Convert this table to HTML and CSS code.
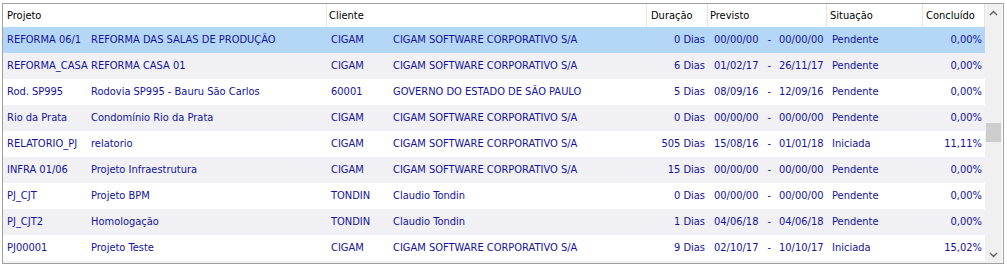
FILE: index.html
```html
<!DOCTYPE html>
<html lang="pt">
<head>
<meta charset="utf-8">
<title>Projetos</title>
<link rel="stylesheet" href="styles.css">
</head>
<body>
<div class="frame">
  <div class="table">
    <div class="head">
      <div class="h h-proj">Projeto</div>
      <div class="h h-cli">Cliente</div>
      <div class="h h-dur">Duração</div>
      <div class="h h-prev">Previsto</div>
      <div class="h h-sit">Situação</div>
      <div class="h h-conc">Concluído</div>
    </div>
    <div class="row sel">
      <div class="c code">REFORMA 06/1</div><div class="c desc">REFORMA DAS SALAS DE PRODUÇÃO</div>
      <div class="c ccode">CIGAM</div><div class="c cname">CIGAM SOFTWARE CORPORATIVO S/A</div>
      <div class="c dur">0 Dias</div><div class="c prev"><span>00/00/00</span><span class="dash">-</span><span>00/00/00</span></div>
      <div class="c sit">Pendente</div><div class="c conc">0,00%</div>
    </div>
    <div class="row alt">
      <div class="c code">REFORMA_CASA</div><div class="c desc">REFORMA CASA 01</div>
      <div class="c ccode">CIGAM</div><div class="c cname">CIGAM SOFTWARE CORPORATIVO S/A</div>
      <div class="c dur">6 Dias</div><div class="c prev"><span>01/02/17</span><span class="dash">-</span><span>26/11/17</span></div>
      <div class="c sit">Pendente</div><div class="c conc">0,00%</div>
    </div>
    <div class="row">
      <div class="c code">Rod. SP995</div><div class="c desc">Rodovia SP995 - Bauru São Carlos</div>
      <div class="c ccode">60001</div><div class="c cname">GOVERNO DO ESTADO DE SÃO PAULO</div>
      <div class="c dur">5 Dias</div><div class="c prev"><span>08/09/16</span><span class="dash">-</span><span>12/09/16</span></div>
      <div class="c sit">Pendente</div><div class="c conc">0,00%</div>
    </div>
    <div class="row alt">
      <div class="c code">Rio da Prata</div><div class="c desc">Condomínio Rio da Prata</div>
      <div class="c ccode">CIGAM</div><div class="c cname">CIGAM SOFTWARE CORPORATIVO S/A</div>
      <div class="c dur">0 Dias</div><div class="c prev"><span>00/00/00</span><span class="dash">-</span><span>00/00/00</span></div>
      <div class="c sit">Pendente</div><div class="c conc">0,00%</div>
    </div>
    <div class="row">
      <div class="c code">RELATORIO_PJ</div><div class="c desc">relatorio</div>
      <div class="c ccode">CIGAM</div><div class="c cname">CIGAM SOFTWARE CORPORATIVO S/A</div>
      <div class="c dur">505 Dias</div><div class="c prev"><span>15/08/16</span><span class="dash">-</span><span>01/01/18</span></div>
      <div class="c sit">Iniciada</div><div class="c conc">11,11%</div>
    </div>
    <div class="row alt">
      <div class="c code">INFRA 01/06</div><div class="c desc">Projeto Infraestrutura</div>
      <div class="c ccode">CIGAM</div><div class="c cname">CIGAM SOFTWARE CORPORATIVO S/A</div>
      <div class="c dur">15 Dias</div><div class="c prev"><span>00/00/00</span><span class="dash">-</span><span>00/00/00</span></div>
      <div class="c sit">Pendente</div><div class="c conc">0,00%</div>
    </div>
    <div class="row">
      <div class="c code">PJ_CJT</div><div class="c desc">Projeto BPM</div>
      <div class="c ccode">TONDIN</div><div class="c cname">Claudio Tondin</div>
      <div class="c dur">0 Dias</div><div class="c prev"><span>00/00/00</span><span class="dash">-</span><span>00/00/00</span></div>
      <div class="c sit">Pendente</div><div class="c conc">0,00%</div>
    </div>
    <div class="row alt">
      <div class="c code">PJ_CJT2</div><div class="c desc">Homologação</div>
      <div class="c ccode">TONDIN</div><div class="c cname">Claudio Tondin</div>
      <div class="c dur">1 Dias</div><div class="c prev"><span>04/06/18</span><span class="dash">-</span><span>04/06/18</span></div>
      <div class="c sit">Pendente</div><div class="c conc">0,00%</div>
    </div>
    <div class="row">
      <div class="c code">PJ00001</div><div class="c desc">Projeto Teste</div>
      <div class="c ccode">CIGAM</div><div class="c cname">CIGAM SOFTWARE CORPORATIVO S/A</div>
      <div class="c dur">9 Dias</div><div class="c prev"><span>02/10/17</span><span class="dash">-</span><span>10/10/17</span></div>
      <div class="c sit">Iniciada</div><div class="c conc">15,02%</div>
    </div>
    <div class="row alt"></div>
  </div>
  <div class="scroll">
    <div class="arrow"><svg width="9" height="6" viewBox="0 0 9 6"><polyline points="1,5 4.5,1.5 8,5" fill="none" stroke="#606060" stroke-width="1.4"/></svg></div>
    <div class="track"><div class="thumb"></div></div>
    <div class="arrow"><svg width="9" height="6" viewBox="0 0 9 6"><polyline points="1,1 4.5,4.5 8,1" fill="none" stroke="#606060" stroke-width="1.4"/></svg></div>
  </div>
</div>
</body>
</html>
```
FILE: styles.css
```css
html, body {
  margin: 0;
  padding: 0;
  background: #ffffff;
}
body {
  padding: 3px 0 0 2px;
  font-family: "DejaVu Sans Condensed", "DejaVu Sans", sans-serif;
  font-stretch: condensed;
  font-size: 11px;
}
.frame {
  width: 1000px;
  height: 259px;
  border: 1px solid #a0a0a0;
  display: flex;
  overflow: hidden;
  background: #ffffff;
}
.table {
  width: 982px;
  flex: none;
  overflow: hidden;
}
.head, .row {
  display: grid;
  grid-template-columns: 85px 239px 62px 258px 61px 119px 96px 62px;
}
.head {
  height: 23px;
  background: #ffffff;
  color: #000000;
}
.h {
  display: flex;
  align-items: center;
  border-right: 1px solid #e5e5e5;
  white-space: nowrap;
}
.h-proj { grid-column: span 2; padding-left: 4px; }
.h-cli { grid-column: span 2; padding-left: 2px; }
.h-dur { padding-left: 4px; }
.h-prev { padding-left: 2px; }
.h-sit { padding-left: 3px; }
.h-conc { padding-left: 3px; }
.row {
  height: 26px;
  color: #12129c;
  background: #ffffff;
}
.row.alt { background: #f0f0f5; }
.row.sel { background: #b4d7f8; }
.c {
  display: flex;
  align-items: center;
  white-space: nowrap;
  overflow: hidden;
  padding-bottom: 2px;
  box-sizing: border-box;
}
.code { padding-left: 4px; }
.desc { padding-left: 3px; }
.ccode { padding-left: 4px; }
.cname { padding-left: 4px; }
.dur { justify-content: flex-end; padding-right: 3px; }
.prev { padding-left: 6px; }
.dash { margin: 0 8px 0 9px; }
.sit { padding-left: 5px; }
.conc { justify-content: flex-end; padding-right: 3px; }
.scroll {
  width: 17px;
  flex: none;
  background: #f0f0f0;
  display: flex;
  flex-direction: column;
}
.arrow {
  height: 17px;
  display: flex;
  align-items: center;
  justify-content: center;
}
.track {
  flex: 1;
  position: relative;
}
.thumb {
  position: absolute;
  left: 1px;
  width: 15px;
  top: 102px;
  height: 19px;
  background: #cdcdcd;
}
```
